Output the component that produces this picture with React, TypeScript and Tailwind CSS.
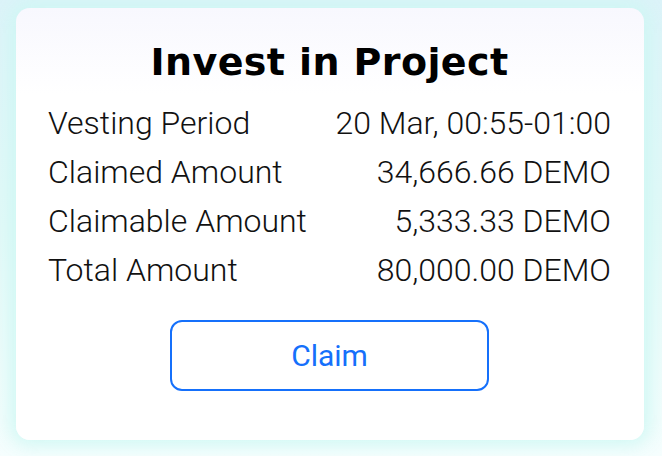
import React from "react";

const rows: [string, string][] = [
  ["Vesting Period", "20 Mar, 00:55-01:00"],
  ["Claimed Amount", "34,666.66 DEMO"],
  ["Claimable Amount", "5,333.33 DEMO"],
  ["Total Amount", "80,000.00 DEMO"],
];

export default function App() {
  return (
    <div className="w-[662px] h-[456px] pt-2 pl-4 pr-[18px] pb-4 bg-gradient-to-b from-[#dcf3f9] via-[#e2f9f8] to-[#f6fefe] font-['Roboto',sans-serif]">
      <div className="h-full rounded-[14px] bg-gradient-to-b from-[#f8f8fe] to-white to-[20%] pl-8 pr-[33px] pt-[32px] flex flex-col shadow-[0_0_18px_6px_rgba(205,247,243,0.9)]">
        <h1 className="text-center text-[38px] leading-[44px] font-bold tracking-[0.4px] text-black font-['DejaVu_Sans',sans-serif]">
          Invest in Project
        </h1>
        <div className="mt-[15px] flex flex-col">
          {rows.map(([k, v]) => (
            <div key={k} className="flex justify-between text-[32px] leading-[49px] font-light text-[#111]">
              <span>{k}</span>
              <span>{v}</span>
            </div>
          ))}
        </div>
        <div className="flex justify-center mt-[25px]">
          <button className="w-[319px] h-[71px] rounded-[12px] border-2 border-[#1570fb] text-[#1570fb] text-[30px] bg-white">
            Claim
          </button>
        </div>
      </div>
    </div>
  );
}
